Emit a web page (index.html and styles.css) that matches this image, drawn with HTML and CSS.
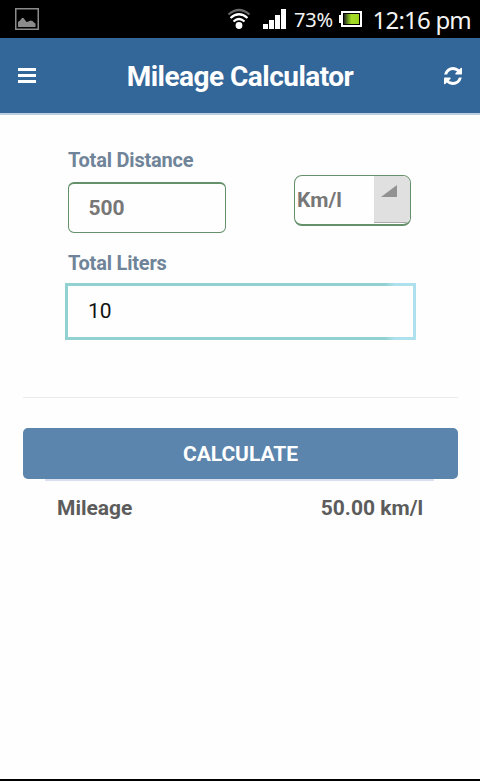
FILE: index.html
```html
<!DOCTYPE html>
<html lang="en">
<head>
<meta charset="utf-8">
<title>Mileage Calculator</title>
<link rel="stylesheet" href="styles.css">
</head>
<body>
<div class="status">
  <svg class="picture" width="24" height="22" viewBox="0 0 24 22"><rect x=".75" y=".75" width="22.5" height="20.5" fill="none" stroke="#8b8b8b" stroke-width="1.5"/><path d="M3 19V14l2-1.500 2-2.500h1.500l3 4 2-.5 2-1 2 .5 2 2 1 .5V19z" fill="#8b8b8b"/></svg>
  <svg class="wifi" width="24" height="22" viewBox="0 0 24 22"><g fill="none" stroke-width="2.2"><path d="M1.5 6.5Q12-2.5 22.500 6.500" stroke="#686868"/><path d="M3.500 10Q12 2.500 20.500 10M6.500 13.500Q12 8.500 17.500 13.500" stroke="#fff"/></g><circle cx="12" cy="17.500" r="3.400" fill="#fff"/></svg>
  <svg class="signal" width="24" height="20" viewBox="0 0 24 20"><path d="M0 15h5v5H0zM6 11h5v9H6zM12 6h5v14h-5zM18 0h5v20h-5z" fill="#fff"/></svg>
  <span class="percent">73%</span>
  <svg class="battery" width="24" height="16" viewBox="0 0 24 16"><defs><linearGradient id="charge"><stop offset="0" stop-color="#222"/><stop offset=".3" stop-color="#72a01e"/><stop offset=".5" stop-color="#a5dc28"/><stop offset="1" stop-color="#9bd51e"/></linearGradient></defs><path d="M0 4h3v8H0z" fill="#fff"/><rect x="3" y="1" width="19" height="14" fill="#000" stroke="#fff" stroke-width="2"/><path d="M5 3h15v10H5z" fill="url(#charge)"/></svg>
  <span class="clock">12:16 pm</span>
</div>
<header class="header">
  <svg width="18" height="16" viewBox="0 0 18 16"><path d="M0 0h18v3H0zM0 6h18v3H0zM0 12h18v3H0z" fill="#fff"/></svg>
  <h1>Mileage Calculator</h1>
  <svg width="18" height="18" viewBox="0 128 1536 1536"><path fill="#fff" d="M1511 1056q0 5-1 7-64 268-268 434.500t-478 166.500q-146 0-282.500-55t-243.500-157l-129 129q-19 19-45 19t-45-19-19-45v-448q0-26 19-45t45-19h448q26 0 45 19t19 45-19 45l-137 137q71 66 161 102t187 36q134 0 250-65t186-179q11-17 53-117 8-23 30-23h192q13 0 22.500 9.500t9.500 22.500zm25-800v448q0 26-19 45t-45 19h-448q-26 0-45-19t-19-45 19-45l138-138q-148-137-349-137-134 0-250 65t-186 179q-11 17-53 117-8 23-30 23h-199q-13 0-22.500-9.500t-9.500-22.500v-7q65-268 270-434.500t480-166.500q146 0 284 55.500t245 156.500l130-129q19-19 45-19t45 19 19 45z"/></svg>
</header>
<main>
  <div class="row">
    <div class="distance">
      <div class="label">Total Distance</div>
      <div class="field">500</div>
    </div>
    <div class="select"><span>Km/l</span><div class="arrow"><svg width="16" height="12" viewBox="0 0 16 12"><path d="M16 0v12H0z" fill="#929292"/></svg></div></div>
  </div>
  <div class="liters">
    <div class="label">Total Liters</div>
    <div class="focused">10</div>
  </div>
  <div class="divider"></div>
  <button class="calculate">CALCULATE</button>
  <div class="result"><span>Mileage</span><span>50.00 km/l</span></div>
</main>
</body>
</html>
```
FILE: styles.css
```css
* { box-sizing: border-box; }
body {
  margin: 0;
  height: 781px;
  display: flex;
  flex-direction: column;
  overflow: hidden;
  background: #fefefe;
  border-bottom: 2px solid #000;
  font-family: Roboto, "Liberation Sans", sans-serif;
}
svg { display: block; flex: none; }
.status {
  height: 38px;
  flex: none;
  display: flex;
  align-items: center;
  padding: 0 9px 0 15px;
  background: #000;
  color: #f3f3f3;
  font-family: "Noto Sans", sans-serif;
}
.wifi { margin-left: 188px; }
.signal { margin-left: 12px; }
.percent { width: 39px; margin-left: 7px; font-size: 20px; letter-spacing: -.2px; white-space: nowrap; }
.battery { margin-left: 6px; }
.clock { margin-left: auto; font-size: 24px; letter-spacing: -.8px; white-space: nowrap; }
.header {
  height: 77px;
  flex: none;
  display: flex;
  align-items: center;
  justify-content: space-between;
  padding: 0 18px;
  background: #336699;
  border-bottom: 2px solid #bdcddd;
  color: #fff;
}
.header h1 { margin: 0; padding-top: 2px; font-size: 28px; letter-spacing: -.52px; line-height: 32px; font-weight: 700; }
main { padding: 0 22px 0 23px; }
.row { display: flex; justify-content: space-between; padding: 33px 47px 0 45px; }
.label { color: #708499; font-size: 20px; letter-spacing: -.2px; line-height: 24px; font-weight: 700; }
.field {
  width: 158px;
  height: 51px;
  margin-top: 10px;
  padding-left: 19.5px;
  border: 1px solid #64916a;
  border-top-width: 2px;
  border-radius: 6px;
  color: #777;
  font-size: 21px;
  line-height: 48px;
  font-weight: 700;
}
.select {
  display: flex;
  justify-content: space-between;
  width: 117px;
  height: 51px;
  margin-top: 27px;
  padding-left: 2px;
  border: 1px solid #64916a;
  border-bottom-width: 2px;
  border-radius: 8px;
  overflow: hidden;
  color: #777;
  font-size: 21px;
  line-height: 48px;
  font-weight: 700;
}
.arrow { width: 36px; height: 47px; padding: 9px 0 0 7px; background: #e0e0e0; border-bottom: 1px solid #aaa; }
.liters { padding: 18px 42px 0 42px; }
.liters .label { padding-left: 3px; }
.focused {
  height: 57px;
  margin-top: 8px;
  padding-left: 20px;
  border: 3px solid;
  border-image: linear-gradient(90deg, #91d1d2 0 91%, #aee1ed 94%) 3;
  color: #111;
  font-size: 21px;
  line-height: 51px;
}
.divider { height: 1px; margin-top: 57px; background: #ebebeb; }
.calculate {
  display: block;
  width: 100%;
  height: 51px;
  margin-top: 30px;
  padding: 2px 0 0;
  border: 0;
  border-radius: 5px;
  background: #5b85ad;
  color: #fff;
  font: 700 21px/49px Roboto, sans-serif;
  letter-spacing: -.05px;
}
.result {
  display: flex;
  justify-content: space-between;
  margin: 0 24px 0 22px;
  padding: 15px 11px 0 12px;
  border-top: 2px solid #d8dfef;
  color: #5c5c5c;
  font-size: 21px;
  line-height: 25px;
  font-weight: 700;
}
```
